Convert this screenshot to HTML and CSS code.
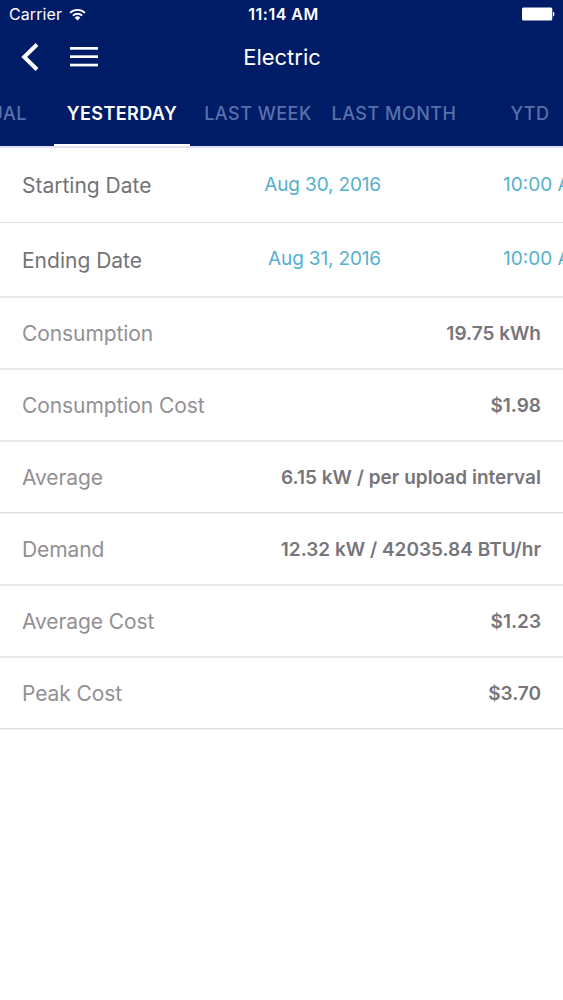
FILE: index.html
```html
<!DOCTYPE html>
<html lang="en">
<head>
    <meta charset="UTF-8">
    <meta name="viewport" content="width=device-width, initial-scale=1.0">
    <title>Electric</title>
    <link rel="stylesheet" href="styles.css">
</head>
<body>
    <header class="header">
        <div class="status-bar">
            <div class="carrier">
                <span>Carrier</span>
                <svg class="wifi" width="17" height="13" viewBox="0 0 18 14" fill="none" stroke="#fff" stroke-width="2">
                    <path d="M1 5.2a11.6 11.6 0 0 1 16 0"/>
                    <path d="M4 8.2a7.3 7.3 0 0 1 10 0"/>
                    <path d="M9 13.4 6 10.4a4.3 4.3 0 0 1 6 0z" fill="#fff" stroke="none"/>
                </svg>
            </div>
            <span class="time">11:14 AM</span>
            <svg class="battery" width="33" height="14" viewBox="0 0 33 14" fill="#fff">
                <rect x="0" y="0.5" width="30.3" height="13" rx="1.5"/>
                <path d="M31 4.8c2 .6 2 4 0 4.6z"/>
            </svg>
        </div>

        <div class="nav-bar">
            <div class="nav-buttons">
                <svg width="18" height="28" viewBox="0 0 18 28" fill="none" stroke="#fff" stroke-width="4">
                    <path d="M16 1.5 3.2 14 16 26.5"/>
                </svg>
                <svg width="28" height="20" viewBox="0 0 28 20" fill="#fff">
                    <rect y="0" width="28" height="2.7"/>
                    <rect y="8.3" width="28" height="2.7"/>
                    <rect y="16.7" width="28" height="2.7"/>
                </svg>
            </div>
            <h1 class="title">Electric</h1>
        </div>

        <nav class="tabs">
            <a class="tab">MANUAL</a>
            <a class="tab active">YESTERDAY</a>
            <a class="tab">LAST WEEK</a>
            <a class="tab">LAST MONTH</a>
            <a class="tab">YTD</a>
        </nav>
    </header>

    <main>
        <div class="row date-row">
            <span class="label">Starting Date</span>
            <span class="date">Aug 30, 2016</span>
            <span class="hour">10:00 AM</span>
        </div>
        <div class="row date-row thick">
            <span class="label">Ending Date</span>
            <span class="date">Aug 31, 2016</span>
            <span class="hour">10:00 AM</span>
        </div>
        <div class="row thick">
            <span class="label">Consumption</span>
            <span class="value">19.75 kWh</span>
        </div>
        <div class="row thick">
            <span class="label">Consumption Cost</span>
            <span class="value">$1.98</span>
        </div>
        <div class="row soft">
            <span class="label">Average</span>
            <span class="value">6.15 kW / per upload interval</span>
        </div>
        <div class="row thick">
            <span class="label">Demand</span>
            <span class="value">12.32 kW / 42035.84 BTU/hr</span>
        </div>
        <div class="row thick">
            <span class="label">Average Cost</span>
            <span class="value">$1.23</span>
        </div>
        <div class="row soft">
            <span class="label">Peak Cost</span>
            <span class="value">$3.70</span>
        </div>
    </main>
</body>
</html>
```

FILE: styles.css
```css
* { box-sizing: border-box; }
body { margin: 0; background: #fff; font-family: Inter, "Liberation Sans", sans-serif; overflow: hidden; }

.header { height: 148px; background: #001c66; color: #fff; border-bottom: 2px solid #e3dff5; overflow: hidden; }

.status-bar { display: grid; grid-template-columns: 1fr auto 1fr; align-items: center; height: 28px; padding: 0 8px 0 9px; font-size: 16px; }
.carrier { display: flex; align-items: center; gap: 7px; letter-spacing: 0.1px; }
.time { padding-left: 3px; font-weight: 600; letter-spacing: 0.5px; }
.battery { justify-self: end; }

.nav-bar { display: grid; grid-template-columns: 1fr auto 1fr; align-items: center; height: 58px; padding-left: 21px; padding-right: 20px; }
.nav-buttons { display: flex; align-items: center; gap: 31px; }
.title { margin: 0; font-size: 22px; font-weight: 400; }

.tabs { display: grid; grid-template-columns: repeat(5, 136px); height: 60px; margin-left: -82px; }
.tab { display: flex; align-items: center; justify-content: center; padding-bottom: 4px; border-bottom: 2px solid transparent; color: #5871ab; font-size: 18px; font-weight: 500; letter-spacing: 0.5px; white-space: nowrap; }
.tab.active { color: #fff; font-weight: 600; letter-spacing: 0.4px; border-bottom-color: #fff; }

.row { display: flex; align-items: center; justify-content: space-between; height: 72px; padding: 0 22px; border-bottom: 1px solid #dedee0; white-space: nowrap; }
.row.thick { border-bottom: 2px solid #e7e7e9; }
.row.soft { box-shadow: inset 0 -1px #dedee0; border-bottom-color: #f2f2f4; }
.label { color: #929095; font-size: 21px; letter-spacing: -0.08px; }
.value { color: #77757a; font-size: 19px; font-weight: 600; }

.date-row { display: grid; grid-template-columns: 232px 127px 1fr; height: 75px; padding-right: 0; }
.date-row .label { padding-top: 1px; color: #747277; letter-spacing: 0; }
.date, .hour { padding-bottom: 2px; color: #55b0cd; font-size: 19px; letter-spacing: -0.15px; text-align: right; }
.hour { padding-left: 122px; overflow: hidden; letter-spacing: 0; text-align: left; }
```
